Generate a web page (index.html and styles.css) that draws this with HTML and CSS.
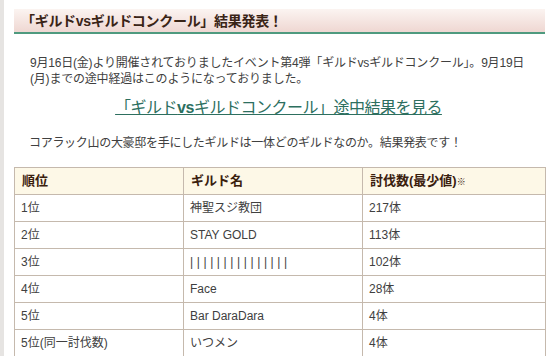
FILE: index.html
```html
<!DOCTYPE html>
<html lang="ja">
<head>
<meta charset="utf-8">
<link rel="stylesheet" href="styles.css">
</head>
<body>
<div class="page">
  <h2 class="title">「ギルドvsギルドコンクール」結果発表！</h2>
  <p class="lead">9月16日(金)より開催されておりましたイベント第4弾「ギルドvsギルドコンクール」。9月19日<br>(月)までの途中経過はこのようになっておりました。</p>
  <p class="linkrow"><a href="#" class="biglink">「ギルド<b>vs</b>ギルドコンクール」途中結果を見る</a></p>
  <p class="lead2">コアラック山の大豪邸を手にしたギルドは一体どのギルドなのか。結果発表です！</p>
  <table class="rank">
    <colgroup><col class="c1"><col class="c2"><col class="c3"></colgroup>
    <thead>
      <tr><th>順位</th><th>ギルド名</th><th>討伐数(最少値)<span class="note">※</span></th></tr>
    </thead>
    <tbody>
      <tr><td>1位</td><td>神聖スジ教団</td><td>217体</td></tr>
      <tr><td>2位</td><td>STAY GOLD</td><td>113体</td></tr>
      <tr><td>3位</td><td class="bars">|||||||||||||||</td><td>102体</td></tr>
      <tr><td>4位</td><td>Face</td><td>28体</td></tr>
      <tr><td>5位</td><td>Bar DaraDara</td><td>4体</td></tr>
      <tr><td>5位(同一討伐数)</td><td>いつメン</td><td>4体</td></tr>
    </tbody>
  </table>
</div>
</body>
</html>
```

FILE: styles.css
```css
html, body {
  margin: 0;
  padding: 0;
  background: #ffffff;
}
body {
  border-left: 4px solid #e6e4e2;
  font-family: "Liberation Sans", "Noto Sans CJK JP", sans-serif;
  color: #404040;
  font-size: 12px;
}
.page {
  padding: 9px 1px 0 10px;
}
.title {
  margin: 0;
  height: 23px;
  line-height: 24px;
  padding-left: 7px;
  font-size: 14px;
  font-weight: bold;
  color: #3a2416;
  background: linear-gradient(#fbf4f1, #efd7d2);
  border-bottom: 2px solid #4f9a7f;
  letter-spacing: -0.3px;
}
.lead {
  margin: 21px 0 0 16px;
  line-height: 16px;
  font-size: 12px;
  letter-spacing: -0.2px;
}
.linkrow {
  margin: 10px 0 0 0;
  text-align: center;
  line-height: 22px;
  padding-right: 2px;
}
.biglink {
  font-size: 16px;
  color: #2d6f5f;
  text-decoration: underline;
  letter-spacing: -0.5px;
}
.biglink b {
  font-weight: bold;
}
.lead2 {
  margin: 15px 0 0 15px;
  line-height: 16px;
  letter-spacing: -0.3px;
}
.rank {
  margin-top: 16px;
  width: 531px;
  border-collapse: collapse;
  table-layout: fixed;
}
.c1 { width: 169px; }
.c2 { width: 179px; }
.c3 { width: 183px; }
.rank th, .rank td {
  border: 1px solid #c5b9ad;
  height: 26px;
  line-height: 16px;
  padding: 0 6px;
  text-align: left;
  vertical-align: middle;
}
.rank th {
  background: #fdf8e7;
  color: #3a200e;
  font-size: 13px;
  font-weight: bold;
  padding-left: 7px;
}
.rank td {
  font-size: 12px;
  color: #404040;
}
.note {
  font-size: 9px;
  font-weight: normal;
}
.bars {
  letter-spacing: 3.6px;
  font-size: 11px;
}
```
